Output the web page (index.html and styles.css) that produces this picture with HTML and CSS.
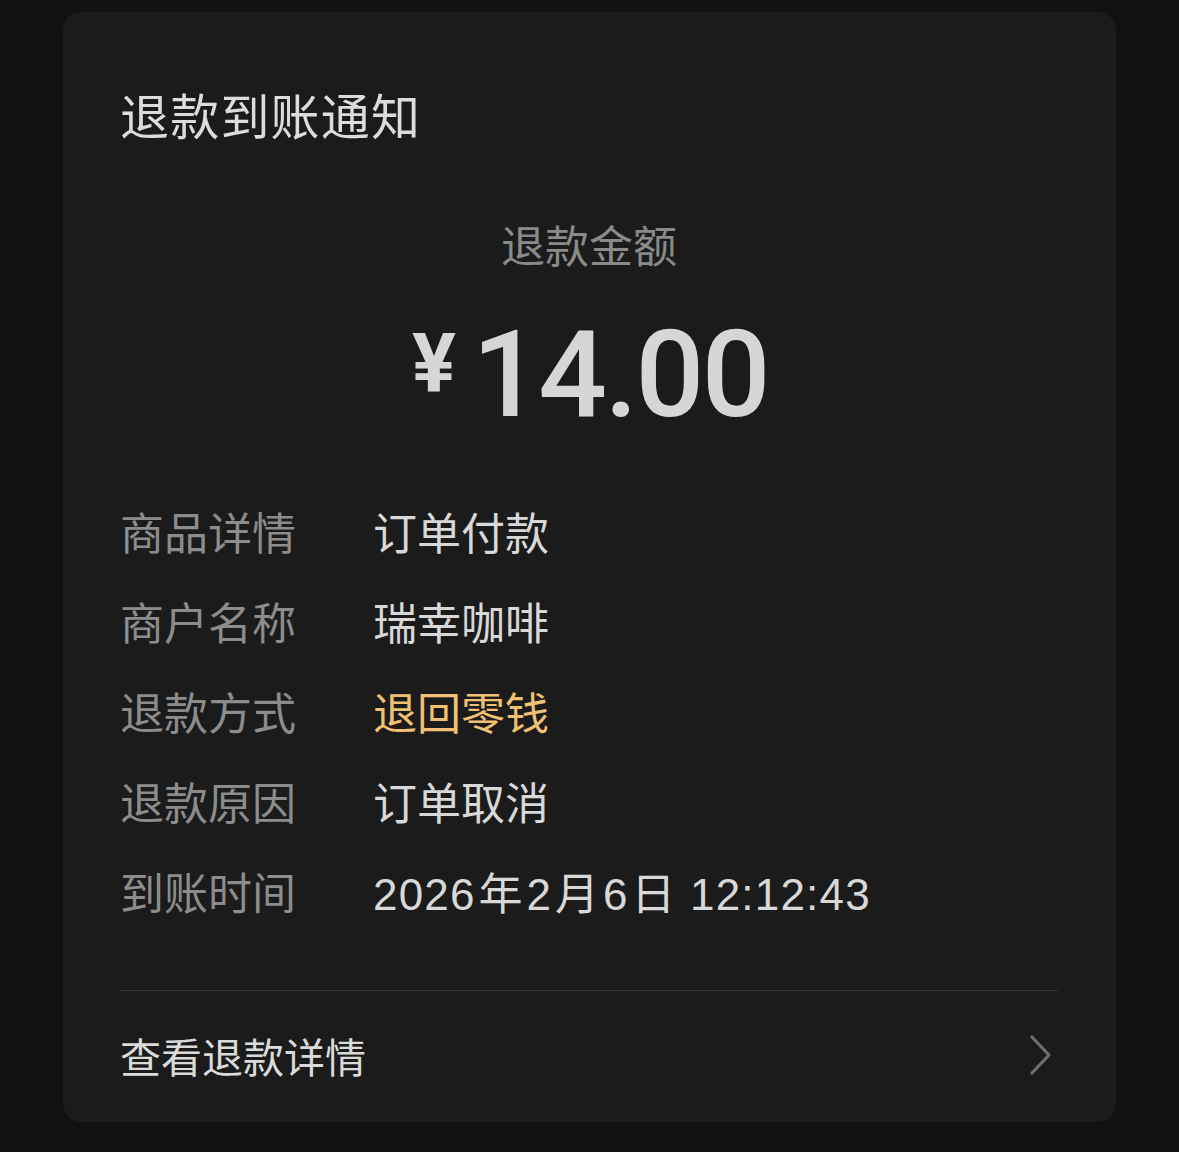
FILE: index.html
```html
<!DOCTYPE html>
<html lang="zh-CN">
<head>
<meta charset="utf-8">
<title>退款到账通知</title>
<link rel="stylesheet" href="styles.css">
</head>
<body>
<div class="card">
  <div class="title">退款到账通知</div>
  <div class="sub">退款金额</div>
  <div class="amount"><span class="yen">¥</span><span class="num">14.00</span></div>
  <div class="rows">
    <div class="row"><span class="label">商品详情</span><span class="value">订单付款</span></div>
    <div class="row"><span class="label">商户名称</span><span class="value">瑞幸咖啡</span></div>
    <div class="row"><span class="label">退款方式</span><span class="value orange">退回零钱</span></div>
    <div class="row"><span class="label">退款原因</span><span class="value">订单取消</span></div>
    <div class="row"><span class="label">到账时间</span><span class="value date">2026<span class="sp"> </span>年<span class="sp"> </span>2<span class="sp"> </span>月<span class="sp"> </span>6<span class="sp"> </span>日 12:12:43</span></div>
  </div>
  <div class="divider"></div>
  <div class="more">
    <span class="more-text">查看退款详情</span>
    <svg class="chev" width="26" height="42" viewBox="0 0 26 42"><path d="M4 3 L21 21 L4 39" fill="none" stroke="#6e6e6e" stroke-width="3.2" stroke-linecap="round" stroke-linejoin="round"/></svg>
  </div>
</div>
</body>
</html>
```

FILE: styles.css
```css
html, body {
  margin: 0;
  padding: 0;
  background: #111111;
}
body {
  width: 1179px;
  height: 1152px;
  overflow: hidden;
  font-family: "Noto Sans CJK SC", "Noto Sans", sans-serif;
  padding-top: 12px;
  box-sizing: border-box;
}
.card {
  margin-left: 63px;
  width: 1053px;
  height: 1110px;
  box-sizing: border-box;
  background: #1b1b1b;
  border-radius: 18px;
  padding: 0 58px 0 57px;
  display: flex;
  flex-direction: column;
}
.title {
  margin-top: 66px;
  height: 72px;
  line-height: 72px;
  font-size: 49px;
  letter-spacing: 1.2px;
  color: #dcdcdc;
}
.sub {
  margin-top: 64px;
  height: 60px;
  line-height: 60px;
  font-size: 44px;
  color: #8a8a8a;
  text-align: center;
}
.amount {
  margin-top: 36px;
  height: 130px;
  display: flex;
  justify-content: center;
  align-items: flex-start;
  color: #d6d6d6;
  font-family: Roboto, "Liberation Sans", sans-serif;
  font-weight: 500;
}
.yen {
  font-size: 82px;
  line-height: 82px;
  margin-top: 12px;
  margin-right: 16px;
  font-weight: 700;
}
.num {
  font-size: 121px;
  line-height: 130px;
  letter-spacing: -2.5px;
  margin-right: -2px;
}
.rows {
  margin-top: 46px;
  display: flex;
  flex-direction: column;
}
.row {
  height: 90px;
  display: flex;
  align-items: center;
  font-size: 44px;
}
.label {
  width: 253px;
  flex: none;
  color: #8c8c8c;
}
.value {
  color: #d8d8d8;
}
.orange {
  color: #f0c074;
}
.date {
  font-family: "Liberation Sans", "Noto Sans CJK SC", sans-serif;
  font-size: 44px;
  letter-spacing: 1.2px;
}
.sp {
  font-size: 10px;
  letter-spacing: 0;
}
.divider {
  margin-top: 54px;
  height: 1px;
  background: #333333;
}
.more {
  height: 128px;
  display: flex;
  align-items: center;
  justify-content: space-between;
}
.more-text {
  font-size: 41px;
  color: #dadada;
}
.chev {
  margin-right: 4px;
}
```
